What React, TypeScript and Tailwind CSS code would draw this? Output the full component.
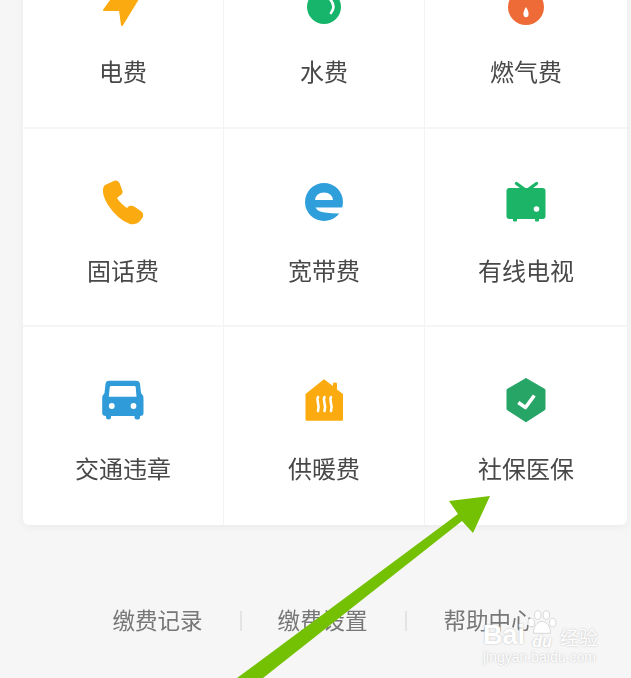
const ELECTRIC = (
  <svg width="48" height="48" viewBox="0 0 48 48">
    <path d="M5 31 L24 5 H48 L23 46 L21 31 Z" fill="#fbab0f" stroke="#fbab0f" strokeWidth="2" strokeLinejoin="round" />
  </svg>
);

const WATER = (
  <svg width="48" height="48" viewBox="0 0 48 48">
    <circle cx="24" cy="28" r="17" fill="#17b56b" />
    <path d="M29 19 C34 24 35 29 31 34" fill="none" stroke="#ffffff" strokeWidth="2.6" strokeLinecap="round" />
  </svg>
);

const GAS = (
  <svg width="48" height="48" viewBox="0 0 48 48">
    <circle cx="24" cy="28" r="18" fill="#ee6a36" />
    <path d="M24 28 C26 31 27 34 26.5 36 C26 39 22 39 21.5 36 C21 34 22 31 24 28 Z" fill="#ffffff" />
  </svg>
);

const PHONE = (
  <svg width="48" height="48" viewBox="0 0 48 48">
    <path
      d="M6 7 L16 2.5 Q19 2 20.5 5 L23.5 13 Q24 16 21 17.5 L18 20 Q21 25 28 30 L30 28 Q33 27 36 29 L43 34 Q45 36 44 39 L41 43 Q37 47 31 46 Q19 42 9 27 Q3 17 4 11 Q4.5 8 6 7 Z"
      fill="#fbab0f"
    />
  </svg>
);

const BROADBAND = (
  <svg width="48" height="48" viewBox="0 0 48 48">
    <circle cx="24" cy="24" r="19" fill="#2f9fdc" />
    <path d="M15 22 Q16 14.5 24 14.5 Q32 14.5 33 22 Z" fill="#ffffff" />
    <path d="M15.5 29.5 H46 V33 L39 35.5 Q31 35.5 25 34.5 Q18 34 15.5 29.5 Z" fill="#ffffff" />
  </svg>
);

const TV = (
  <svg width="48" height="48" viewBox="0 0 48 48">
    <path d="M14.5 5.5 L22 11 M34.5 5.5 L27 11" stroke="#1cb567" strokeWidth="3.4" strokeLinecap="round" />
    <rect x="4.5" y="10" width="39" height="31" rx="3" fill="#1cb567" />
    <rect x="11" y="40" width="4" height="3.5" rx="1" fill="#1cb567" />
    <rect x="33" y="40" width="4" height="3.5" rx="1" fill="#1cb567" />
    <circle cx="34.5" cy="31" r="2.8" fill="#ffffff" />
  </svg>
);

const CAR = (
  <svg width="48" height="48" viewBox="0 0 48 48">
    <path
      fillRule="evenodd"
      d="M10 4.7 H37 Q40.5 4.7 41 8 L42 17 Q44.5 19 44.5 23 V37 Q44.5 40 41 40 V41.5 Q41 43.5 38 43.5 Q35.5 43.5 35.5 41.5 V40 H12 V41.5 Q12 43.5 9.5 43.5 Q7 43.5 7 41.5 V40 Q3.2 40 3.2 37 V23 Q3.2 19 5.5 17 L6.5 8 Q7 4.7 10 4.7 Z M12 10 H35.5 Q36.5 10 36.7 11 L37.5 20.7 H9.8 L10.8 11 Q11 10 12 10 Z"
      fill="#2f9bd8"
    />
    <circle cx="12.8" cy="30" r="2.9" fill="#ffffff" />
    <circle cx="34.5" cy="30" r="2.9" fill="#ffffff" />
  </svg>
);

const HEATING = (
  <svg width="48" height="48" viewBox="0 0 48 48">
    <path
      d="M24 3.3 L33 10 V7.5 Q33 6.5 35 6.5 Q37 6.5 37 7.5 V13.5 L43 18 V43.5 Q43 44.7 42 44.7 H6.5 Q5.5 44.7 5.5 43.5 V18 Z"
      fill="#fbab0f"
    />
    <path
      d="M18 21 C15.5 25 20.5 28 18 35 M24.5 21 C22 25 27 28 24.5 35 M31 21 C28.5 25 33.5 28 31 35"
      fill="none"
      stroke="#ffffff"
      strokeWidth="2.6"
      strokeLinecap="round"
    />
  </svg>
);

const SHIELD = (
  <svg width="48" height="48" viewBox="0 0 48 48">
    <path
      d="M24 2.5 L43 13.5 V33.5 L24 45.8 L5 33.5 V13.5 Z"
      fill="#27a567"
      stroke="#27a567"
      strokeWidth="1"
      strokeLinejoin="round"
    />
    <path d="M16.3 26.5 L23.5 31.5 L32.3 19.5" fill="none" stroke="#ffffff" strokeWidth="3.6" strokeLinejoin="round" />
  </svg>
);

const services = [
  { name: "电费", icon: ELECTRIC },
  { name: "水费", icon: WATER },
  { name: "燃气费", icon: GAS },
  { name: "固话费", icon: PHONE },
  { name: "宽带费", icon: BROADBAND },
  { name: "有线电视", icon: TV },
  { name: "交通违章", icon: CAR },
  { name: "供暖费", icon: HEATING },
  { name: "社保医保", icon: SHIELD },
];

const links = ["缴费记录", "缴费设置", "帮助中心"];

export default function App() {
  return (
    <div className="relative h-[678px] overflow-hidden bg-[#f6f6f6] font-['Noto_Sans_CJK_SC','Liberation_Sans',sans-serif]">
      <div className="ml-[23px] mt-[-70px] grid w-[604px] grid-cols-[201px_201px_202px] rounded-b-md bg-white shadow-[0_2px_8px_rgba(0,0,0,0.05)]">
        {services.map((item, i) => (
          <div
            key={item.name}
            className={`flex flex-col items-center pt-[49px] ${i < 3 ? "h-[199px]" : "h-[198px]"} ${i % 3 !== 2 ? "border-r border-r-[#f3f3f3]" : ""} ${i < 6 ? "border-b-2 border-b-[#f5f5f5]" : ""}`}
          >
            {item.icon}
            <span className="mt-[27px] text-[24px] leading-[34px] text-[#484848] blur-[0.3px]">{item.name}</span>
          </div>
        ))}
      </div>

      <div className="ml-[77px] mt-[86px] flex">
        {links.map((link, i) => (
          <div key={link} className={`flex h-[20px] w-[165px] items-center justify-center pr-[2px] ${i < 2 ? "border-r-2 border-r-[#e4e4e4]" : ""}`}>
            <span className="pb-[4px] text-[22.5px] leading-[20px] text-[#777777] blur-[0.3px]">{link}</span>
          </div>
        ))}
      </div>

      {/* annotation arrow drawn on top of the screenshot */}
      <svg className="absolute left-0 top-0" width="631" height="678" viewBox="0 0 631 678">
        <polygon points="490,496 473,533 462,521 263,678 237,678 458,514 449,501" fill="#74c002" />
      </svg>

      {/* baidu watermark */}
      <div className="absolute left-[483px] top-[609px] flex flex-col text-white [text-shadow:0_0_2px_#b8b8b8]">
        <div className="flex items-end gap-[2px]">
          <span className="font-['Liberation_Sans',sans-serif] text-[27px] font-bold leading-[30px]">Bai</span>
          <div className="flex flex-col items-center">
            <svg width="30" height="25" viewBox="0 0 28 22">
              <g fill="#ffffff" stroke="#cccccc" strokeWidth="0.7">
                <ellipse cx="4" cy="12" rx="3" ry="4" />
                <ellipse cx="10" cy="5" rx="3" ry="4" />
                <ellipse cx="18" cy="5" rx="3" ry="4" />
                <ellipse cx="24" cy="12" rx="3" ry="4" />
                <path d="M14 11 C18 11 22 15 22 22 H6 C6 15 10 11 14 11 Z" />
              </g>
            </svg>
            <span className="font-['Liberation_Sans',sans-serif] text-[16px] font-bold italic leading-[16px]">du</span>
          </div>
          <span className="pl-[1px] text-[19px] leading-[26px]">经验</span>
        </div>
        <span className="mt-[-1px] whitespace-nowrap font-['Liberation_Sans',sans-serif] text-[14px] leading-[16px]">jingyan.baidu.com</span>
      </div>
    </div>
  );
}
